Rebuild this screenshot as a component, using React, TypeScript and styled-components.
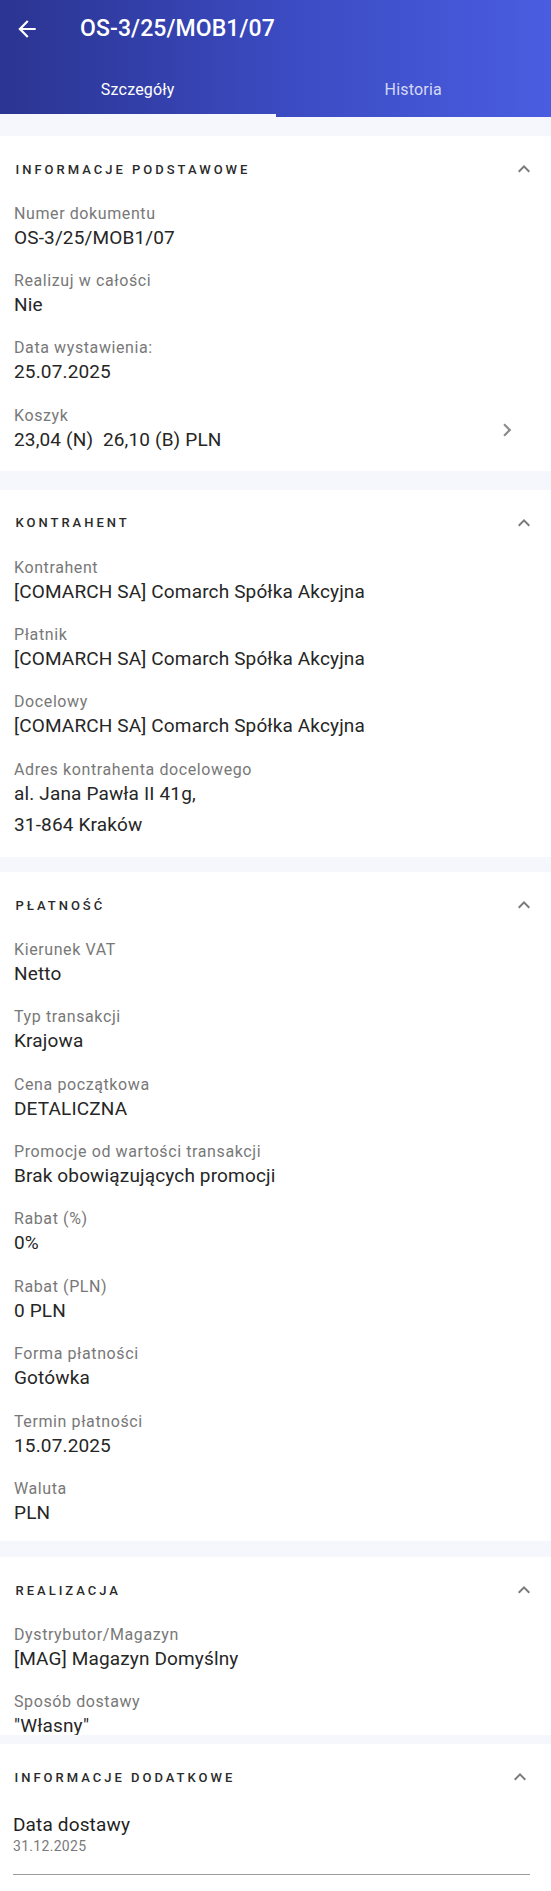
import { FC } from 'react';
import styled, { createGlobalStyle } from 'styled-components';

type Field = {
  label: string;
  values: string[];
  link?: boolean;
};

type SectionData = {
  title: string;
  gap: number;
  pb: number;
  height?: number;
  fields: Field[];
};

const sections: SectionData[] = [
  {
    title: 'INFORMACJE PODSTAWOWE',
    gap: 19,
    pb: 17,
    fields: [
      { label: 'Numer dokumentu', values: ['OS-3/25/MOB1/07'] },
      { label: 'Realizuj w całości', values: ['Nie'] },
      { label: 'Data wystawienia:', values: ['25.07.2025'] },
      { label: 'Koszyk', values: ['23,04 (N)  26,10 (B) PLN'], link: true },
    ],
  },
  {
    title: 'KONTRAHENT',
    gap: 19,
    pb: 18,
    fields: [
      { label: 'Kontrahent', values: ['[COMARCH SA] Comarch Spółka Akcyjna'] },
      { label: 'Płatnik', values: ['[COMARCH SA] Comarch Spółka Akcyjna'] },
      { label: 'Docelowy', values: ['[COMARCH SA] Comarch Spółka Akcyjna'] },
      { label: 'Adres kontrahenta docelowego', values: ['al. Jana Pawła II 41g,', '31-864 Kraków'] },
    ],
  },
  {
    title: 'PŁATNOŚĆ',
    gap: 15.5,
    pb: 13.5,
    fields: [
      { label: 'Kierunek VAT', values: ['Netto'] },
      { label: 'Typ transakcji', values: ['Krajowa'] },
      { label: 'Cena początkowa', values: ['DETALICZNA'] },
      { label: 'Promocje od wartości transakcji', values: ['Brak obowiązujących promocji'] },
      { label: 'Rabat (%)', values: ['0%'] },
      { label: 'Rabat (PLN)', values: ['0 PLN'] },
      { label: 'Forma płatności', values: ['Gotówka'] },
      { label: 'Termin płatności', values: ['15.07.2025'] },
      { label: 'Waluta', values: ['PLN'] },
    ],
  },
  {
    title: 'REALIZACJA',
    gap: 16.5,
    pb: 0,
    height: 178,
    fields: [
      { label: 'Dystrybutor/Magazyn', values: ['[MAG] Magazyn Domyślny'] },
      { label: 'Sposób dostawy', values: ['"Własny"'] },
    ],
  },
];

const BackIcon: FC = () => (
  <svg width="26" height="26" viewBox="0 0 24 24" fill="#ffffff">
    <path d="M20 11H7.83l5.59-5.59L12 4l-8 8 8 8 1.41-1.41L7.83 13H20v-2z" />
  </svg>
);

const ExpandLess: FC = () => (
  <svg width="24" height="24" viewBox="0 0 24 24" fill="#7a7a7a">
    <path d="M12 8l-6 6 1.41 1.41L12 10.83l4.59 4.58L18 14z" />
  </svg>
);

const ChevronRight: FC = () => (
  <svg width="26" height="26" viewBox="0 0 24 24" fill="#8a8a8a">
    <path d="M10 6L8.59 7.41 13.17 12l-4.58 4.59L10 18l6-6z" />
  </svg>
);

const App: FC = () => {
  return (
    <>
      <GlobalStyle />
      <Page>
        <Header>
          <Toolbar>
            <BackButton>
              <BackIcon />
            </BackButton>
            <Title>OS-3/25/MOB1/07</Title>
          </Toolbar>
          <Tabs>
            <Tab $active>Szczegóły</Tab>
            <Tab>Historia</Tab>
          </Tabs>
        </Header>

        {sections.map((section) => (
          <Section key={section.title} $gap={section.gap} $pb={section.pb} $height={section.height}>
            <SectionHeader>
              <SectionTitle>{section.title}</SectionTitle>
              <ExpandLess />
            </SectionHeader>
            <FieldList>
              {section.fields.map((field) => (
                <FieldRow key={field.label}>
                  <FieldBody>
                    <Label>{field.label}</Label>
                    {field.values.map((value, i) => (
                      <Value key={value} $next={i > 0}>
                        {value}
                      </Value>
                    ))}
                  </FieldBody>
                  {field.link && (
                    <LinkArrow>
                      <ChevronRight />
                    </LinkArrow>
                  )}
                </FieldRow>
              ))}
            </FieldList>
          </Section>
        ))}

        <Section $gap={9} $pb={17} $last>
          <SectionHeader>
            <SectionTitle>INFORMACJE DODATKOWE</SectionTitle>
            <ExpandLess />
          </SectionHeader>
          <InputField>
            <InputLabel>Data dostawy</InputLabel>
            <InputValue>31.12.2025</InputValue>
          </InputField>
        </Section>
      </Page>
    </>
  );
};

export default App;

const GlobalStyle = createGlobalStyle`
  body {
    margin: 0;
    background: #f6f7fc;
    font-family: Roboto, 'Noto Sans', sans-serif;
  }
`;

const Page = styled.div`
  width: 551px;
  min-height: 1891px;
  background: #f6f7fc;
  display: flex;
  flex-direction: column;
`;

const Header = styled.header`
  background: linear-gradient(90deg, #2b3491 0%, #3c4cc4 55%, #4a5de1 100%);
  color: #ffffff;
`;

const Toolbar = styled.div`
  height: 58px;
  display: flex;
  align-items: center;
  padding-left: 14px;
  gap: 40px;
`;

const BackButton = styled.div`
  width: 26px;
  height: 26px;
  display: flex;
`;

const Title = styled.h1`
  margin: 0;
  font-size: 23px;
  font-weight: 500;
  line-height: 28px;
  letter-spacing: 0.1px;
`;

const Tabs = styled.div`
  display: grid;
  grid-template-columns: 1fr 1fr;
  height: 59px;
`;

const Tab = styled.div<{ $active?: boolean }>`
  display: flex;
  align-items: center;
  justify-content: center;
  padding-top: 6px;
  font-size: 16px;
  letter-spacing: 0.2px;
  color: ${(p) => (p.$active ? '#ffffff' : 'rgba(255, 255, 255, 0.78)')};
  border-bottom: 3px solid ${(p) => (p.$active ? '#f6f7fc' : 'transparent')};
`;

const Section = styled.section<{ $gap: number; $pb: number; $height?: number; $last?: boolean }>`
  margin-top: ${(p) => p.$gap}px;
  background: #ffffff;
  padding: 23px ${(p) => (p.$last ? 19 : 15)}px ${(p) => p.$pb}px ${(p) => (p.$last ? 13 : 14)}px;
  ${(p) => (p.$height ? `height: ${p.$height}px; box-sizing: border-box; overflow: hidden;` : '')}
  ${(p) => (p.$last ? 'flex: 1;' : '')}
`;

const SectionHeader = styled.div`
  display: flex;
  align-items: center;
  justify-content: space-between;
  height: 20px;
  padding-left: 1.5px;
`;

const SectionTitle = styled.h2`
  margin: 0;
  font-size: 13px;
  font-weight: 500;
  letter-spacing: 3px;
  color: #2a2a2a;
`;

const FieldList = styled.div`
  display: flex;
  flex-direction: column;
  gap: 19.4px;
  margin-top: 24.7px;
`;

const FieldRow = styled.div`
  display: flex;
  align-items: center;
`;

const FieldBody = styled.div`
  flex: 1;
  display: flex;
  flex-direction: column;
`;

const Label = styled.span`
  font-size: 16px;
  line-height: 20px;
  letter-spacing: 0.6px;
  color: #787878;
`;

const Value = styled.span<{ $next?: boolean }>`
  font-size: 19px;
  line-height: 28px;
  letter-spacing: 0.15px;
  white-space: pre-wrap;
  color: #262626;
  margin-top: ${(p) => (p.$next ? 3 : 0)}px;
`;

const LinkArrow = styled.div`
  display: flex;
  margin-right: 16px;
`;

const InputField = styled.div`
  margin-top: 25.5px;
  margin-right: 2px;
  padding-bottom: 18px;
  border-bottom: 1.5px solid #9c9c9c;
  display: flex;
  flex-direction: column;
`;

const InputLabel = styled.span`
  font-size: 19px;
  line-height: 24px;
  letter-spacing: 0.15px;
  color: #1f1f1f;
`;

const InputValue = styled.span`
  font-size: 14px;
  line-height: 19px;
  letter-spacing: 0.3px;
  color: #7a7a7a;
`;
